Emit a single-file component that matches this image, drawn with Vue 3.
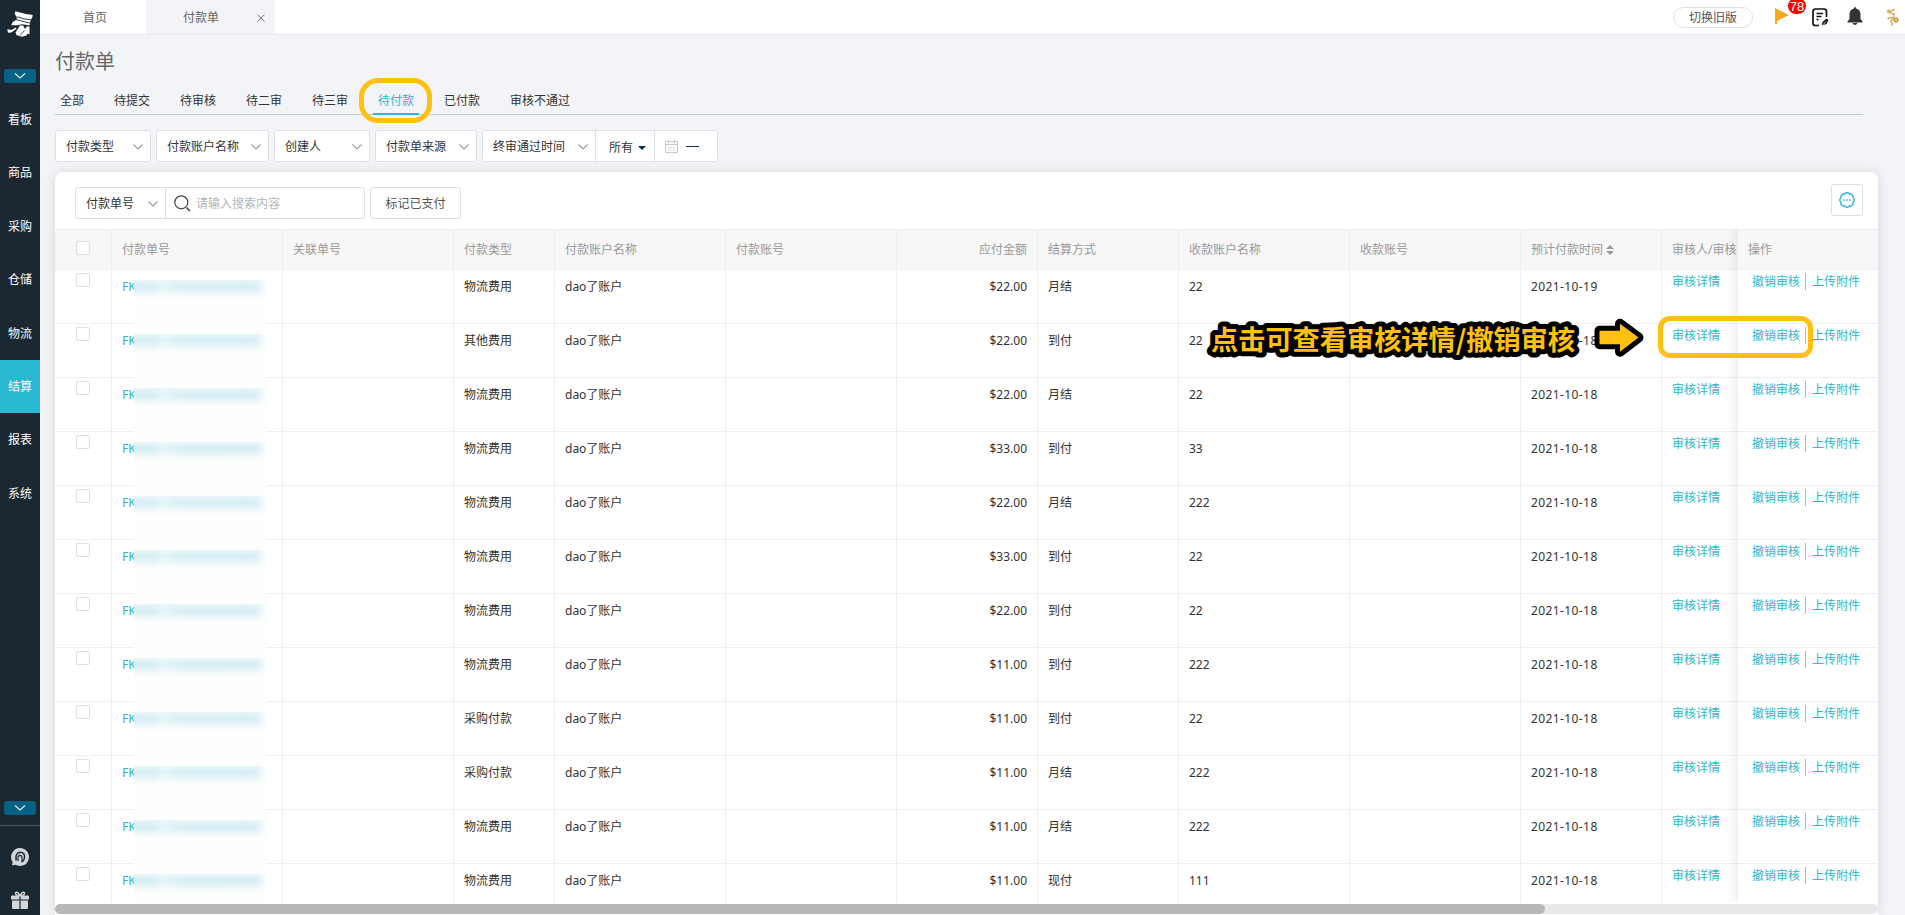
<!-- PaymentOrders.vue -->
<script setup>
import { ref } from 'vue';

const menus = ['看板', '商品', '采购', '仓储', '物流', '结算', '报表', '系统'];
const activeMenu = ref('结算');

const tabs = ['全部', '待提交', '待审核', '待二审', '待三审', '待付款', '已付款', '审核不通过'];
const activeTab = ref('待付款');

const filters = [
    { label: '付款类型', cls: 'w96' },
    { label: '付款账户名称', cls: 'w113' },
    { label: '创建人', cls: 'w96' },
    { label: '付款单来源', cls: 'w102' }
];

const keyword = ref('');

const rows = [
    ['物流费用', '$22.00', '月结', '22', '2021-10-19'],
    ['其他费用', '$22.00', '到付', '22', '2021-10-18'],
    ['物流费用', '$22.00', '月结', '22', '2021-10-18'],
    ['物流费用', '$33.00', '到付', '33', '2021-10-18'],
    ['物流费用', '$22.00', '月结', '222', '2021-10-18'],
    ['物流费用', '$33.00', '到付', '22', '2021-10-18'],
    ['物流费用', '$22.00', '到付', '22', '2021-10-18'],
    ['物流费用', '$11.00', '到付', '222', '2021-10-18'],
    ['采购付款', '$11.00', '到付', '22', '2021-10-18'],
    ['采购付款', '$11.00', '月结', '222', '2021-10-18'],
    ['物流费用', '$11.00', '月结', '222', '2021-10-18'],
    ['物流费用', '$11.00', '现付', '111', '2021-10-18']
].map(([type, amount, settle, payee, date]) => ({ type, amount, settle, payee, date }));
</script>

<template>
    <div class="layout">
        <aside class="sidebar">
            <svg class="logo" viewBox="0 0 26 26">
                <path d="M8.300 .3Q17 3 25.700 4L25.300 6.500L23.700 8.500L23 11.700L9.700 8.300V6L7.700 3Z" fill="#fff" />
                <path d="M10 5.800Q17 8.500 23.500 8.700" stroke="#1b2831" stroke-width=".9" fill="none" />
                <path d="M9 9L23.500 12.800L22 14.300L15 13.200L10.500 14.200L4.300 14.300L5.700 11Z" fill="#fff" />
                <path d="M13 14.500L16 14.200L18 18L20 15.200L22.500 15.500V23.500L20.500 22.500L19.500 24.500L15 25.700L9.700 24.300L8.500 21.500L11 17.500Z" fill="#fff" />
                <path d="M.3 18.300L4.300 19L8.800 16.500L9.500 17.800L4.300 21.500L1 21.700Z" fill="#fff" />
                <path d="M13 24.500L17.500 19.500" stroke="#1b2831" stroke-width=".8" fill="none" />
            </svg>
            <div class="fold">
                <svg viewBox="0 0 12 6"><path d="M1 .5L6 5L11 .5" /></svg>
            </div>
            <nav class="menu">
                <a v-for="m in menus" :key="m" :class="{ active: m === activeMenu }" @click="activeMenu = m">{{ m }}</a>
            </nav>
            <div class="side-bottom">
                <div class="fold">
                    <svg viewBox="0 0 12 6"><path d="M1 .5L6 5L11 .5" /></svg>
                </div>
                <div class="side-icons">
                    <svg viewBox="0 0 18 18">
                        <path d="M9 0A9 9 0 1 1 4.500 16.800L1 17.500L1.600 14A9 9 0 0 1 9 0Z" fill="#d3d6d8" />
                        <path d="M5.200 12.500Q3.800 5 9 4.300Q14.200 4.500 13.500 10Q13 13 10.500 14" fill="none" stroke="#1b2831" stroke-width="1.500" />
                        <path d="M7 13V9.200Q7.300 7.300 9.200 7.300Q11 7.500 11 9.500V13" fill="none" stroke="#1b2831" stroke-width="1.200" />
                    </svg>
                    <svg viewBox="0 0 18 18" fill="#d3d6d8">
                        <path d="M1 4.500H17Q18 4.500 18 5.500V8.500H9.600V5H8.400V8.500H0V5.500Q0 4.500 1 4.500Z" />
                        <path d="M1 9.500H8.400V18H2Q1 18 1 17ZM9.600 9.500H17V17Q17 18 16 18H9.600Z" />
                        <path d="M9 4.500Q4 4.500 4.500 2Q6 -.5 9 4.500Q12 -.5 13.500 2Q14 4.500 9 4.500Z" fill="none" stroke="#d3d6d8" stroke-width="1.500" />
                    </svg>
                </div>
            </div>
        </aside>

        <div class="main">
            <header class="topbar">
                <div class="page-tab home">首页</div>
                <div class="page-tab current">
                    <span>付款单</span>
                    <svg viewBox="0 0 8 8"><path d="M.5 .5L7.500 7.500M7.500 .5L.5 7.500" /></svg>
                </div>
                <div class="tools">
                    <button class="switch-old">切换旧版</button>
                    <div class="flag">
                        <svg viewBox="0 0 14 16"><path d="M0 0L14 7L2 13V16H0Z" fill="#f7a91b" /></svg>
                        <span class="badge">78</span>
                    </div>
                    <svg class="doc" viewBox="0 0 17 19" fill="none" stroke="#111" stroke-width="1.700">
                        <path d="M14.500 9V3.500Q14.500 1 12 1H3.500Q1 1 1 3.500V15.500Q1 17.500 3.500 17.500H7" />
                        <path d="M4.500 5.500H11M4.500 8.500H9.500M4.500 11.500H6.500" stroke-width="1.500" />
                        <path d="M9.700 17.500L10.500 14L14.500 10.500L16.500 12L14.500 16Z" fill="#111" stroke="none" />
                        <path d="M11 16.800L14 13.500" stroke="#fff" stroke-width=".8" />
                    </svg>
                    <svg class="bell" viewBox="0 0 16 18" fill="#333">
                        <path d="M7 1.500Q7 0 8 0Q9 0 9 1.500Q13.500 2.500 13.500 7.500V12L15.500 14.500V15.500H.5V14.500L2.500 12V7.500Q2.500 2.500 7 1.500ZM5.500 16H10.500Q9.500 18 8 18Q6.500 18 5.500 16Z" />
                    </svg>
                    <svg class="runner" viewBox="0 0 13 19" fill="none" stroke="#d5ad62" stroke-width="1.500">
                        <circle cx="3" cy="3.500" r="2" fill="#d9ad5b" stroke="none" />
                        <path d="M4 4.500L7 2L9 1.500M4.500 5.500L8 6L7.500 10L4 9.500L1.500 11M7 10.500L5 13.500L6.500 16L5.500 18" />
                        <circle cx="10" cy="12" r="2.200" fill="#e2bd77" stroke="#b98a35" stroke-width="1" />
                    </svg>
                </div>
            </header>

            <section class="content">
                <h1>付款单</h1>
                <div class="status-tabs">
                    <a v-for="t in tabs" :key="t" :class="{ active: t === activeTab }" @click="activeTab = t">
                        {{ t }}<i v-if="t === '待付款'" class="ring"></i>
                    </a>
                </div>

                <div class="filters">
                    <div v-for="f in filters" :key="f.label" class="select" :class="f.cls">
                        <span>{{ f.label }}</span>
                        <svg class="arrow" viewBox="0 0 10 6"><path d="M.5 .5L5 5L9.500 .5" /></svg>
                    </div>
                    <div class="group">
                        <div class="select w113">
                            <span>终审通过时间</span>
                            <svg class="arrow" viewBox="0 0 10 6"><path d="M.5 .5L5 5L9.500 .5" /></svg>
                        </div>
                        <div class="range">所有<i class="caret"></i></div>
                        <div class="dates">
                            <svg viewBox="0 0 13 13" fill="none" stroke="#c3cacd">
                                <path d="M.5 1.500H12.500V12.500H.5ZM.5 4.500H12.500M3.500 0V3M9.500 0V3" />
                                <path d="M3 7.500H10.500M3 9.800H10.500" stroke-dasharray="1.500 1" />
                            </svg>
                            <i class="dash"></i>
                        </div>
                    </div>
                </div>

                <div class="card">
                    <div class="toolbar">
                        <div class="group">
                            <div class="select w90">
                                <span>付款单号</span>
                                <svg class="arrow" viewBox="0 0 10 6"><path d="M.5 .5L5 5L9.500 .5" /></svg>
                            </div>
                            <label class="search">
                                <svg viewBox="0 0 17 17" fill="none" stroke="#444" stroke-width="1.200">
                                    <circle cx="7.300" cy="7.300" r="6.500" />
                                    <path d="M12.500 12.500L16 16" stroke-width="1.600" />
                                </svg>
                                <input v-model="keyword" placeholder="请输入搜索内容" />
                            </label>
                        </div>
                        <button class="btn">标记已支付</button>
                        <button class="btn setting">
                            <svg viewBox="0 0 16 16" fill="none" stroke="#2bb8d0" stroke-width="1.400">
                                <path d="M8 .8Q9.500 .8 10.500 2Q12.500 1.700 13.200 2.800Q14.300 3.500 14 5.500Q15.200 6.500 15.200 8Q15.200 9.500 14 10.500Q14.300 12.500 13.200 13.200Q12.500 14.300 10.500 14Q9.500 15.200 8 15.200Q6.500 15.200 5.500 14Q3.500 14.300 2.800 13.200Q1.700 12.500 2 10.500Q.8 9.500 .8 8Q.8 6.500 2 5.500Q1.700 3.500 2.800 2.800Q3.500 1.700 5.500 2Q6.500 .8 8 .8Z" />
                                <path d="M4.300 8H11.700" stroke-dasharray="1.600 1.300" stroke-width="1.600" />
                            </svg>
                        </button>
                    </div>

                    <div class="table">
                        <div class="tr th">
                            <div class="td check"><i class="box"></i></div>
                            <div class="td">付款单号</div>
                            <div class="td">关联单号</div>
                            <div class="td">付款类型</div>
                            <div class="td">付款账户名称</div>
                            <div class="td">付款账号</div>
                            <div class="td right">应付金额</div>
                            <div class="td">结算方式</div>
                            <div class="td">收款账户名称</div>
                            <div class="td">收款账号</div>
                            <div class="td">预计付款时间<i class="sort"></i></div>
                            <div class="td clip">审核人/审核</div>
                            <div class="td ops">操作</div>
                        </div>
                        <div v-for="(r, i) in rows" :key="i" class="tr">
                            <div class="td check"><i class="box"></i></div>
                            <div class="td link no">FK<span class="mask"><i></i></span></div>
                            <div class="td"></div>
                            <div class="td">{{ r.type }}</div>
                            <div class="td">dao了账户</div>
                            <div class="td"></div>
                            <div class="td right">{{ r.amount }}</div>
                            <div class="td">{{ r.settle }}</div>
                            <div class="td">{{ r.payee }}</div>
                            <div class="td"></div>
                            <div class="td date">{{ r.date }}</div>
                            <div class="td clip link">审核详情</div>
                            <div class="td ops link"><a>撤销审核</a><a>上传附件</a></div>
                        </div>
                        <div class="shade"></div>
                        <div class="mark"></div>
                        <svg class="tip" viewBox="0 0 450 56">
                            <text x="11" y="40">点击可查看审核详情/撤销审核</text>
                            <path d="M399.500 20.700H420V13.700L438.500 27.500L420 41.700V34.300H399.500Z" />
                        </svg>
                    </div>
                    <div class="scroll"><i></i></div>
                </div>
            </section>
        </div>
    </div>
</template>

<style>
body {
    margin: 0;
    overflow: hidden;
}
</style>

<style scoped>
* {
    box-sizing: border-box;
}

.layout {
    display: flex;
    width: 1905px;
    height: 915px;
    overflow: hidden;
    background: #f3f4f8;
    color: #333;
    font: 12px/18px "Noto Sans", "Noto Sans CJK SC", sans-serif;
}

button,
input {
    font: inherit;
}

/* sidebar */
.sidebar {
    width: 40px;
    display: flex;
    flex-direction: column;
    align-items: center;
    background: #1b2831;
    color: #fff;
}

.logo {
    width: 26px;
    height: 26px;
    margin: 11px 0 32px;
    flex: none;
}

.fold {
    width: 32px;
    height: 14px;
    flex: none;
    display: flex;
    align-items: center;
    justify-content: center;
    border-radius: 3px;
    background: #056285;
}

.fold svg {
    width: 12px;
    height: 6px;
    fill: none;
    stroke: #dfeaf0;
    stroke-width: 1.2;
}

.menu {
    width: 100%;
    margin-top: 9.8px;
}

.menu a {
    display: flex;
    height: 53.4px;
    padding-top: 1px;
    align-items: center;
    justify-content: center;
}

.menu .active {
    background: #2ab7d1;
}

.side-bottom {
    width: 100%;
    margin-top: auto;
    display: flex;
    flex-direction: column;
    align-items: center;
}

.side-icons {
    width: 100%;
    height: 90px;
    margin-top: 10px;
    padding-top: 22px;
    border-top: 1px solid #4b565d;
    display: flex;
    flex-direction: column;
    align-items: center;
    gap: 25px;
}

.side-icons svg {
    width: 18px;
    height: 18px;
    overflow: visible;
}

/* top bar */
.main {
    flex: 1;
    min-width: 0;
}

.topbar {
    display: flex;
    height: 35px;
    background: #fff;
    border-bottom: 1px solid #e6e8ea;
}

.page-tab {
    display: flex;
    align-items: center;
    padding-top: 1px;
    color: #666;
}

.home {
    width: 106px;
    padding-left: 43px;
}

.current {
    width: 129px;
    padding-right: 10px;
    padding-left: 37px;
    justify-content: space-between;
    background: #f3f4f8;
}

.current svg {
    width: 8px;
    height: 8px;
    stroke: #777;
    fill: none;
}

.tools {
    display: flex;
    align-items: flex-start;
    margin-left: auto;
    padding-right: 6px;
}

.switch-old {
    width: 80px;
    height: 21px;
    margin: 7px 22px 0 0;
    padding: 1px 0 0;
    border: 1px solid #e0e0e0;
    border-radius: 11px;
    background: #fff;
    color: #555;
    line-height: 18px;
}

.flag {
    position: relative;
    width: 14px;
    margin: 8px 23px 0 0;
}

.flag svg {
    display: block;
    width: 14px;
    height: 16px;
}

.badge {
    position: absolute;
    left: 13px;
    top: -10px;
    width: 18px;
    height: 16px;
    border-radius: 8px;
    background: #f00;
    color: #fff;
    font: 13px/18px "Liberation Sans", sans-serif;
    text-align: center;
}

.doc {
    width: 17px;
    height: 19px;
    margin: 8px 18px 0 0;
}

.bell {
    width: 16px;
    height: 18px;
    margin: 7px 23px 0 0;
}

.runner {
    width: 13px;
    height: 19px;
    margin-top: 8px;
}

/* content */
.content {
    padding: 12px 27px 0 15px;
}

h1 {
    margin: 0;
    font-size: 20px;
    line-height: 30px;
    font-weight: 400;
    color: #666;
}

.status-tabs {
    display: flex;
    gap: 20px;
    height: 28px;
    margin: 10px 15px 0 0;
    border-bottom: 1px solid #b9c9cd;
}

.status-tabs a {
    position: relative;
    height: 28px;
    padding: 5px 5px 0;
}

.status-tabs .active {
    color: #2bb8d0;
    border-bottom: 2px solid #2bb8d0;
}

.ring {
    position: absolute;
    left: -14px;
    top: -9px;
    width: 73px;
    height: 45px;
    border: 5px solid #ffc010;
    border-radius: 19px;
}

.filters {
    display: flex;
    gap: 5px;
    margin-top: 15px;
}

.select {
    display: flex;
    align-items: center;
    justify-content: space-between;
    height: 32px;
    padding: 1px 7px 0 10px;
    border: 1px solid #dcdfe6;
    border-radius: 3px;
    background: #fff;
}

.arrow {
    width: 10px;
    height: 6px;
    fill: none;
    stroke: #999;
    stroke-width: 1.1;
}

.w90 { width: 90px; }
.w96 { width: 96px; }
.w102 { width: 102px; }
.w113 { width: 113px; }

.group {
    display: flex;
    height: 32px;
    border: 1px solid #dcdfe6;
    border-radius: 3px;
    background: #fff;
}

.group .select {
    height: 30px;
    border: 0;
    border-right: 1px solid #dcdfe6;
    border-radius: 3px 0 0 3px;
}

.range {
    width: 59px;
    display: flex;
    align-items: center;
    padding: 3px 0 0 13px;
    border-right: 1px solid #dcdfe6;
}

.caret {
    margin-left: 5px;
    border: 4px solid transparent;
    border-top-color: #03394a;
    border-bottom: 0;
}

.dates {
    width: 62px;
    display: flex;
    align-items: center;
    gap: 8px;
    padding-left: 10px;
}

.dates svg {
    width: 13px;
    height: 13px;
}

.dash {
    width: 13px;
    height: 1px;
    background: #03394a;
}

.card {
    margin-top: 10px;
    height: 743px;
    border-radius: 8px 8px 0 0;
    background: #fff;
    box-shadow: 0 0 12px rgba(0, 0, 0, .12);
}

.toolbar {
    display: flex;
    gap: 5px;
    height: 57px;
    padding: 15px 15px 0 20px;
}

.search {
    width: 198px;
    display: flex;
    align-items: center;
    gap: 5px;
    padding-left: 8px;
}

.search svg {
    width: 17px;
    height: 17px;
    flex: none;
}

.search input {
    flex: 1;
    min-width: 0;
    padding: 1px 0 0;
    border: 0;
    outline: 0;
    background: none;
}

.search input::placeholder {
    color: #b0b6bc;
}

.btn {
    width: 91px;
    height: 32px;
    padding: 1px 0 0;
    border: 1px solid #dcdfe6;
    border-radius: 3px;
    background: #fff;
    color: #555;
}

.setting {
    width: 32px;
    margin: -3px 0 0 auto;
    padding: 0;
    display: flex;
    align-items: center;
    justify-content: center;
}

.setting svg {
    width: 16px;
    height: 16px;
}

/* table */
.table {
    position: relative;
    height: 673px;
    overflow: hidden;
    border-top: 1px solid #eee;
}

.tr {
    display: grid;
    grid-template-columns: 57px 171px 171px 101px 171px 171px 141px 141px 171px 171px 141px 76px 140px;
    height: 54px;
}

.td {
    padding: 8px 10px 0;
    border-right: 1px solid #eee;
    border-bottom: 1px solid #eee;
    white-space: nowrap;
}

.th {
    height: 40px;
    background: #f7f7f7;
    color: #999;
}

.th .td {
    padding-top: 11px;
}

.tr .check {
    padding: 3px 0 0 21px;
}

.th .check {
    padding-top: 11px;
}

.box {
    display: block;
    width: 14px;
    height: 14px;
    border: 1px solid #dcdfe6;
    border-radius: 2px;
    background: #fff;
}

.right {
    text-align: right;
}

.link {
    color: #2bb8d0;
}

.no {
    position: relative;
}

/* order numbers are hidden behind a soft mask */
.mask {
    position: absolute;
    left: 22px;
    top: 10px;
    z-index: 1;
    width: 133px;
    height: 54px;
    overflow: hidden;
    background: #fefefe;
}

.mask i {
    display: block;
    width: 132px;
    height: 11px;
    margin: 1px 0 0 -5px;
    background: linear-gradient(90deg, #cdeaf0 20%, #e0f3f6 25%, #cfebf1 40%, #cfebf1 60%, #cbeaf0 100%);
    filter: blur(4px);
}

.sort {
    display: inline-block;
    width: 8px;
    height: 10px;
    margin-left: 3px;
    vertical-align: -1px;
    background: #999;
    clip-path: polygon(50% 0, 100% 40%, 0 40%, 0 60%, 100% 60%, 50% 100%, 0 60%, 0 40%);
}

.date {
    letter-spacing: .4px;
}

.tr .clip {
    padding-right: 0;
    overflow: hidden;
    border-right: 0;
}

.clip.link,
.tr .ops.link {
    padding-top: 3px;
}

.ops {
    border-right: 0;
}

.ops.link {
    padding-left: 14px;
}

.ops a + a {
    margin-left: 5px;
    padding-left: 6px;
    border-left: 1px solid #b5b5b5;
}

.shade {
    position: absolute;
    left: 1671px;
    top: 0;
    width: 12px;
    height: 673px;
    background: linear-gradient(90deg, transparent, rgba(0, 0, 0, .05));
}

.mark {
    position: absolute;
    left: 1603px;
    top: 86px;
    width: 155px;
    height: 42px;
    border: 5px solid #ffc010;
    border-radius: 12px;
}

.tip {
    position: absolute;
    left: 1145px;
    top: 80px;
    width: 450px;
    height: 56px;
    font: 700 27.2px "Noto Sans CJK SC", sans-serif;
    fill: #ffc010;
    stroke: #000;
    stroke-width: 10px;
    stroke-linejoin: round;
    paint-order: stroke fill;
}

.scroll {
    height: 10px;
    margin-top: 2px;
    border-radius: 5px;
    background: #e9e9e9;
}

.scroll i {
    display: block;
    width: 1490px;
    height: 10px;
    border-radius: 5px;
    background: #b8b8b8;
}
</style>
